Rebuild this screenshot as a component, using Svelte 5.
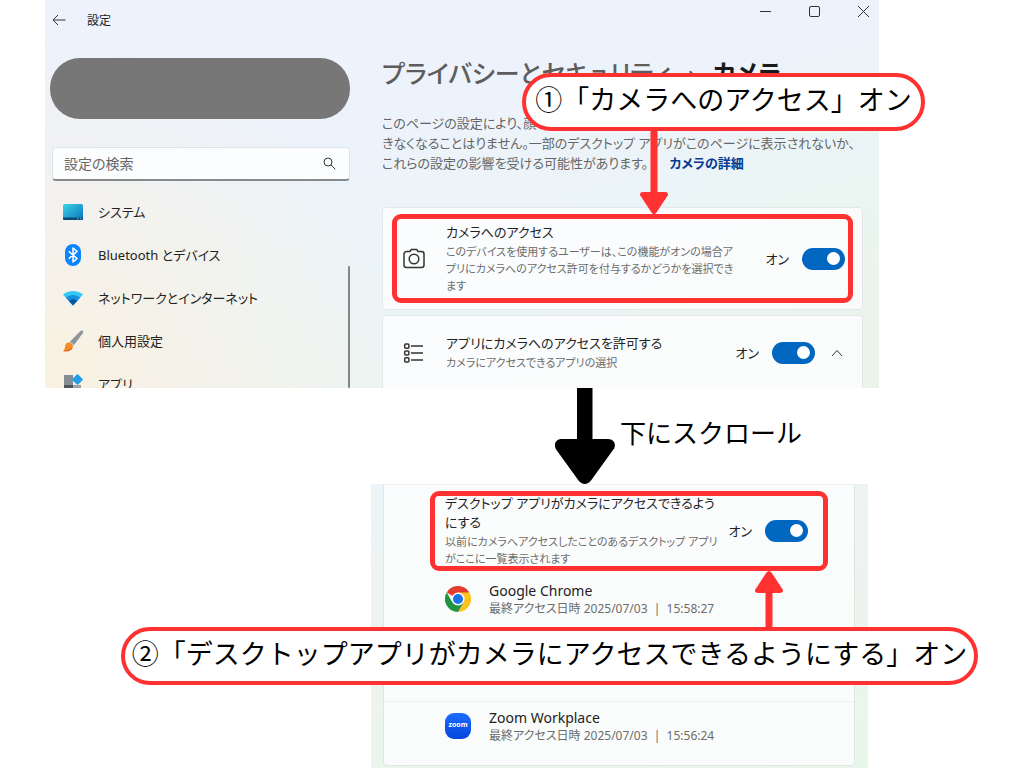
<script>
  const menu = [
    { icon: 'system', label: 'システム' },
    { icon: 'bluetooth', label: 'Bluetooth とデバイス' },
    { icon: 'network', label: 'ネットワークとインターネット' },
    { icon: 'brush', label: '個人用設定' },
    { icon: 'apps', label: 'アプリ' }
  ]

  let search = ''
  let camera = true
  let apps = true
  let desktop = true
</script>

<main class="page" lang="ja">
  <section class="shot top">
    <div class="window">
      <aside>
        <div class="back">
          <button aria-label="戻る">
            <svg width="14" height="12" viewBox="0 0 14 12"><path d="M13.500 6H1M6 1L1 6l5 5" /></svg>
          </button>
          <span>設定</span>
        </div>
        <div class="account"></div>
        <div class="search">
          <input type="text" aria-label="設定の検索" placeholder="設定の検索" bind:value={search} />
          <svg width="13" height="13" viewBox="0 0 13 13"><circle cx="5" cy="5" r="4" /><path d="M8 8l4.300 4.300" /></svg>
        </div>
        <nav>
          {#each menu as item}
            <a href="#{item.icon}">
              <svg width="22" height="22" viewBox="0 0 22 22">
                {#if item.icon === 'system'}
                  <defs><linearGradient id="screen" x2="1" y2="1"><stop stop-color="#3ad4e6" /><stop offset="1" stop-color="#0c72bd" /></linearGradient></defs>
                  <rect x="1" y="3" width="20" height="16" rx="1.500" fill="url(#screen)" />
                  <path d="M1 16.500h20v1a1.500 1.500 0 0 1-1.500 1.500h-17A1.500 1.500 0 0 1 1 17.500z" fill="#0b4a70" />
                  <path d="M15 17.700h1.500M18 17.700h1.500" stroke="#5cc3e8" />
                {:else if item.icon === 'bluetooth'}
                  <rect x="3" y="0" width="16" height="22" rx="8" fill="#0a84ff" />
                  <path d="M6.700 7.300l8.300 7.300-4 3.400V4l4 3.400-8.300 7.300" fill="none" stroke="#fff" stroke-width="1.500" stroke-linejoin="round" />
                {:else if item.icon === 'network'}
                  <path d="M1 7.500C6.500 2.700 15.500 2.700 21 7.500L11 18.500z" fill="#35c8f4" />
                  <path d="M3.900 10.800c4.300-3.700 9.900-3.700 14.200 0L11 18.500z" fill="#1791dc" />
                  <path d="M6.700 13.800c2.600-2.200 6-2.200 8.600 0L11 18.500z" fill="#0955a4" />
                {:else if item.icon === 'brush'}
                  <path d="M20.800.800c.8.800.3 2-.4 3L12 15l-4-3.500L18 1.600c1-1 2-1.500 2.800-.8z" fill="#8c949d" />
                  <path d="M8 11.500l4 3.500-1.500 2-4-4z" fill="#c0c5ca" />
                  <path d="M6.700 12.600c2.600.2 4.400 2.300 4 4.300-.8 4.200-6.200 5-9.700 4 2.300-1.300 1.600-3.300 2.300-5.600.6-1.800 1.800-2.800 3.400-2.700z" fill="#f78a20" />
                  <path d="M1 20.900c3.500 1 8.900.2 9.700-4-2 2.300-4.900 3.600-9.700 4z" fill="#e4591b" />
                {:else}
                  <path d="M2 2h9v10H2z" fill="#878d94" />
                  <path d="M2 12h9v9H2z" fill="#4f545a" />
                  <path d="M11 12h8v9h-8z" fill="#9ea3a8" />
                  <rect x="11.500" y="2.500" width="8" height="8" rx="1" transform="rotate(45 15.500 6.500)" fill="#229fe6" />
                {/if}
              </svg>
              {item.label}
            </a>
          {/each}
        </nav>
        <div class="scrollbar"></div>
      </aside>

      <div class="content">
        <div class="controls">
          <button aria-label="最小化"><svg width="13" height="13" viewBox="0 0 13 13"><path d="M1 6.500h11" /></svg></button>
          <button aria-label="最大化"><svg width="13" height="13" viewBox="0 0 13 13"><rect x="1.500" y="1.500" width="10" height="10" rx="1.500" /></svg></button>
          <button aria-label="閉じる"><svg width="13" height="13" viewBox="0 0 13 13"><path d="M1 1l11 11M12 1L1 12" /></svg></button>
        </div>
        <h1><span>プライバシーとセキュリティ</span><span class="sep">›</span>カメラ</h1>
        <p class="about">
          このページの設定により、顔<br />
          きなくなることはりません。一部のデスクトップ アプリがこのページに表示されないか、<br />
          これらの設定の影響を受ける可能性があります。 <a href="#detail">カメラの詳細</a>
        </p>

        <div class="card access">
          <svg class="glyph" width="24" height="24" viewBox="0 0 24 24">
            <path d="M8 4.500L9.300 2.500h5.400L16 4.500h3.500a2.500 2.500 0 0 1 2.500 2.500v11a2.500 2.500 0 0 1-2.500 2.500h-15A2.500 2.500 0 0 1 2 18V7a2.500 2.500 0 0 1 2.500-2.500z" />
            <circle cx="12" cy="12" r="4.800" />
          </svg>
          <div class="text">
            <h2>カメラへのアクセス</h2>
            <p>このデバイスを使用するユーザーは、この機能がオンの場合ア<br />プリにカメラへのアクセス許可を付与するかどうかを選択でき<br />ます</p>
          </div>
          <label class="switch">オン<input type="checkbox" role="switch" bind:checked={camera} /></label>
          <div class="frame"></div>
        </div>

        <div class="card allow">
          <svg class="glyph" width="24" height="24" viewBox="0 0 24 24">
            <rect x="2.700" y="3" width="4.200" height="4.200" rx="1" /><rect x="2.700" y="9.900" width="4.200" height="4.200" rx="1" /><rect x="2.700" y="16.800" width="4.200" height="4.200" rx="1" />
            <path d="M9 5h12M9 12h12M9 19h12" />
          </svg>
          <div class="text">
            <h2>アプリにカメラへのアクセスを許可する</h2>
            <p>カメラにアクセスできるアプリの選択</p>
          </div>
          <label class="switch">オン<input type="checkbox" role="switch" bind:checked={apps} /></label>
          <button class="fold" aria-label="折りたたむ"><svg width="12" height="8" viewBox="0 0 12 8"><path d="M1 7l5-5.500L11 7" /></svg></button>
        </div>
      </div>
    </div>

    <svg class="arrow down" width="28" height="84" viewBox="0 0 28 84"><path d="M10.500 0h7v62H25c3 0 4 2.500 2 4.500L16.500 82.500c-1.500 2-3.500 2-5 0L1 66.500c-2-2-1-4.500 2-4.500h7.500z" /></svg>
    <div class="callout first">①「カメラへのアクセス」オン</div>
  </section>

  <div class="scroll">
    <svg width="60" height="96" viewBox="0 0 60 96"><path d="M22 0h15.500v51H53c6.500 0 9 6.500 5 11L36 92.500c-3.500 4.500-9 4.500-12.500 0L1.500 62c-3.500-5-1-11 5-11H22z" /></svg>
    <span>下にスクロール</span>
  </div>

  <section class="shot bottom">
    <div class="panel">
      <div class="row desktop">
        <div class="text">
          <h2>デスクトップ アプリがカメラにアクセスできるよう<br />にする</h2>
          <p>以前にカメラへアクセスしたことのあるデスクトップ アプリ<br />がここに一覧表示されます</p>
        </div>
        <label class="switch">オン<input type="checkbox" role="switch" bind:checked={desktop} /></label>
        <div class="frame"></div>
      </div>
      <div class="row app chrome">
        <svg width="26" height="26" viewBox="0 0 48 48">
          <path d="M24 24L3.200 12A24 24 0 0 1 44.800 12z" fill="#e33b2e" />
          <path d="M24 12h20.800A24 24 0 0 1 24 48l10.400-18z" fill="#fcc31e" />
          <path d="M13.600 30L3.200 12A24 24 0 0 0 24 48l10.400-18z" fill="#229342" />
          <circle cx="24" cy="24" r="12" fill="#fff" /><circle cx="24" cy="24" r="9.300" fill="#1a73e8" />
        </svg>
        <div class="text">
          <h2>Google Chrome</h2>
          <p>最終アクセス日時 2025/07/03 &nbsp;|&nbsp; 15:58:27</p>
        </div>
      </div>
      <div class="row app">
        <div class="zoom">zoom</div>
        <div class="text">
          <h2>Zoom Workplace</h2>
          <p>最終アクセス日時 2025/07/03 &nbsp;|&nbsp; 15:56:24</p>
        </div>
      </div>
    </div>

    <svg class="arrow up" width="28" height="57" viewBox="0 0 28 57"><path d="M10.500 57h7V22H25c3 0 4-2.500 2-4.500L16.500 1.500c-1.500-2-3.500-2-5 0L1 17.500c-2 2-1 4.500 2 4.500h7.500z" /></svg>
    <div class="callout second">②「デスクトップアプリがカメラにアクセスできるようにする」オン</div>
  </section>
</main>

<style>
  :global(body) {
    margin: 0;
    background: #fff;
  }

  .page {
    font-family: "Noto Sans", "Noto Sans CJK JP", sans-serif;
    font-size: 14px;
    color: #222;
    font-feature-settings: "palt";
    white-space: nowrap;
    overflow: hidden;
  }

  .page * {
    box-sizing: border-box;
  }

  h1, h2, p {
    margin: 0;
    font-weight: 400;
  }

  button {
    display: flex;
    padding: 0;
    border: none;
    background: none;
  }

  button svg, .search svg, .glyph {
    fill: none;
    stroke: #333;
  }

  .shot {
    position: relative;
  }

  .top {
    margin: 0 145px 0 45px;
  }

  .window {
    display: flex;
    max-height: 388px;
    overflow: hidden;
    background:
      radial-gradient(circle at 0 100%, #faf1e1, #faf1e100 360px),
      radial-gradient(circle at 100% 100%, #eaf4ea, #eaf4ea00 300px),
      linear-gradient(165deg, #edf2fc 25%, #ebf4f7 60%, #edf4ee);
  }

  aside {
    position: relative;
    flex: 0 0 305px;
    padding: 10px 0 0 5px;
  }

  .back {
    display: flex;
    align-items: center;
    gap: 21px;
    height: 20px;
    padding-left: 2px;
    font-size: 12px;
  }

  .account {
    height: 61px;
    margin-top: 28px;
    border-radius: 30px;
    background: #777;
  }

  .search {
    display: flex;
    align-items: center;
    height: 34px;
    margin: 28px 0 0 2px;
    padding: 0 13px 0 11px;
    border: 1px solid #dde4e8;
    border-bottom: 2px solid #868a8d;
    border-radius: 4px;
    background: #fbfdfe;
  }

  .search input {
    flex: 1;
    min-width: 0;
    padding: 0;
    border: none;
    outline: none;
    background: none;
    font: inherit;
  }

  .search input::placeholder {
    color: #666;
    opacity: 1;
  }

  nav {
    margin-top: 9px;
    padding-left: 12px;
    font-size: 13px;
  }

  nav a {
    display: flex;
    align-items: center;
    gap: 14px;
    height: 43px;
    color: #222;
    text-decoration: none;
  }

  .scrollbar {
    position: absolute;
    top: 266px;
    right: 0;
    bottom: 0;
    width: 2px;
    border-radius: 1px;
    background: #838684;
  }

  .content {
    flex: 1;
    min-width: 0;
    padding: 5px 16px 0 32px;
  }

  .controls {
    display: flex;
    justify-content: flex-end;
    gap: 36px;
    margin-right: -7px;
  }

  h1 {
    margin-top: 36px;
    font-size: 25px;
    font-weight: 700;
    line-height: 38px;
    color: #1b1b1b;
  }

  h1 span {
    color: #5d5d5d;
    font-weight: 500;
  }

  h1 .sep {
    margin: 0 17px;
  }

  .about {
    margin-top: 21px;
    font-size: 13px;
    line-height: 20px;
    color: #666;
  }

  .about a {
    margin-left: 18px;
    color: #063a91;
    font-weight: 700;
    text-decoration: none;
  }

  .card {
    position: relative;
    display: flex;
    align-items: center;
    border: 1px solid #e2e8ea;
    border-radius: 4px;
    background: #fbfcfdee;
  }

  .access {
    margin-top: 34px;
    padding: 15px 17px 15px 19px;
  }

  .allow {
    margin-top: 5px;
    padding: 18px 17px 40px 19px;
  }

  .glyph {
    flex: none;
    margin-right: 20px;
    stroke-width: 1.5;
  }

  .text {
    flex: 1;
    min-width: 0;
  }

  h2 {
    font-size: 13px;
    line-height: 19px;
    color: #222;
  }

  .text p {
    margin-top: 1px;
    font-size: 11px;
    line-height: 17px;
    color: #6c6c6c;
  }

  .app h2 {
    font-size: 14px;
  }

  .app .text p {
    margin-top: 0;
    font-size: 12px;
  }

  .switch {
    display: flex;
    align-items: center;
    gap: 13px;
    font-size: 13px;
  }

  .switch input {
    appearance: none;
    display: flex;
    align-items: center;
    width: 43px;
    height: 22px;
    margin: 0;
    padding: 0 5px;
    border-radius: 11px;
    background: #888;
  }

  .switch input::before {
    content: "";
    width: 13px;
    height: 13px;
    border-radius: 50%;
    background: #fff;
  }

  .switch input:checked {
    justify-content: flex-end;
    background: #0067c0;
  }

  .fold {
    margin: 0 2px 0 16px;
  }

  .frame {
    position: absolute;
    border: 5px solid #ff3131;
    border-radius: 9px;
    pointer-events: none;
  }

  .access .frame {
    inset: 6px 9px 6px 9px;
  }

  .arrow {
    position: absolute;
    fill: #ff3131;
  }

  .down {
    top: 130px;
    right: 211px;
  }

  .up {
    top: 87px;
    right: 85px;
  }

  .callout {
    position: absolute;
    display: flex;
    align-items: center;
    justify-content: center;
    height: 58px;
    border: 4px solid #ff3131;
    border-radius: 29px;
    background: #fff;
    color: #000;
    font-family: "Noto Sans CJK JP", sans-serif;
    font-size: 27px;
    font-feature-settings: normal;
    line-height: 40px;
  }

  .first {
    top: 73px;
    right: -46px;
    width: 403px;
    padding-bottom: 7px;
  }

  .second {
    top: 143px;
    right: -110px;
    width: 857px;
    padding-bottom: 7px;
  }

  .scroll {
    display: flex;
    align-items: center;
    gap: 5px;
    height: 96px;
    padding-left: 555px;
    color: #000;
    font-family: "Noto Sans CJK JP", sans-serif;
    font-size: 26px;
    font-feature-settings: normal;
  }

  .scroll span {
    padding-bottom: 10px;
  }

  .bottom {
    margin: 0 156px 0 371px;
    padding: 0 13px 2px 12px;
    background: linear-gradient(170deg, #edf4f8, #edf3ee 45%, #e9f6ea);
  }

  .panel {
    border: 1px solid #dfe8e5;
    border-top-color: #edf1f2;
    border-radius: 0 0 4px 4px;
    background: linear-gradient(#fbfcfd, #f9fcfa);
  }

  .row {
    display: flex;
    align-items: center;
    padding: 0 46px 0 61px;
  }

  .desktop {
    position: relative;
    padding-top: 9px;
  }

  .desktop .frame {
    inset: 6px 26px -4px 46px;
  }

  .app {
    gap: 18px;
  }

  .chrome {
    padding: 14px 46px 84px 61px;
    border-bottom: 1px solid #edf1ef;
  }

  .app:last-child {
    padding: 6px 46px 21px 61px;
  }

  .zoom {
    width: 26px;
    height: 26px;
    border-radius: 9px;
    background: linear-gradient(#1c6dff, #0546dc);
    color: #fff;
    font-size: 7px;
    font-weight: 700;
    line-height: 24px;
    text-align: center;
  }
</style>
